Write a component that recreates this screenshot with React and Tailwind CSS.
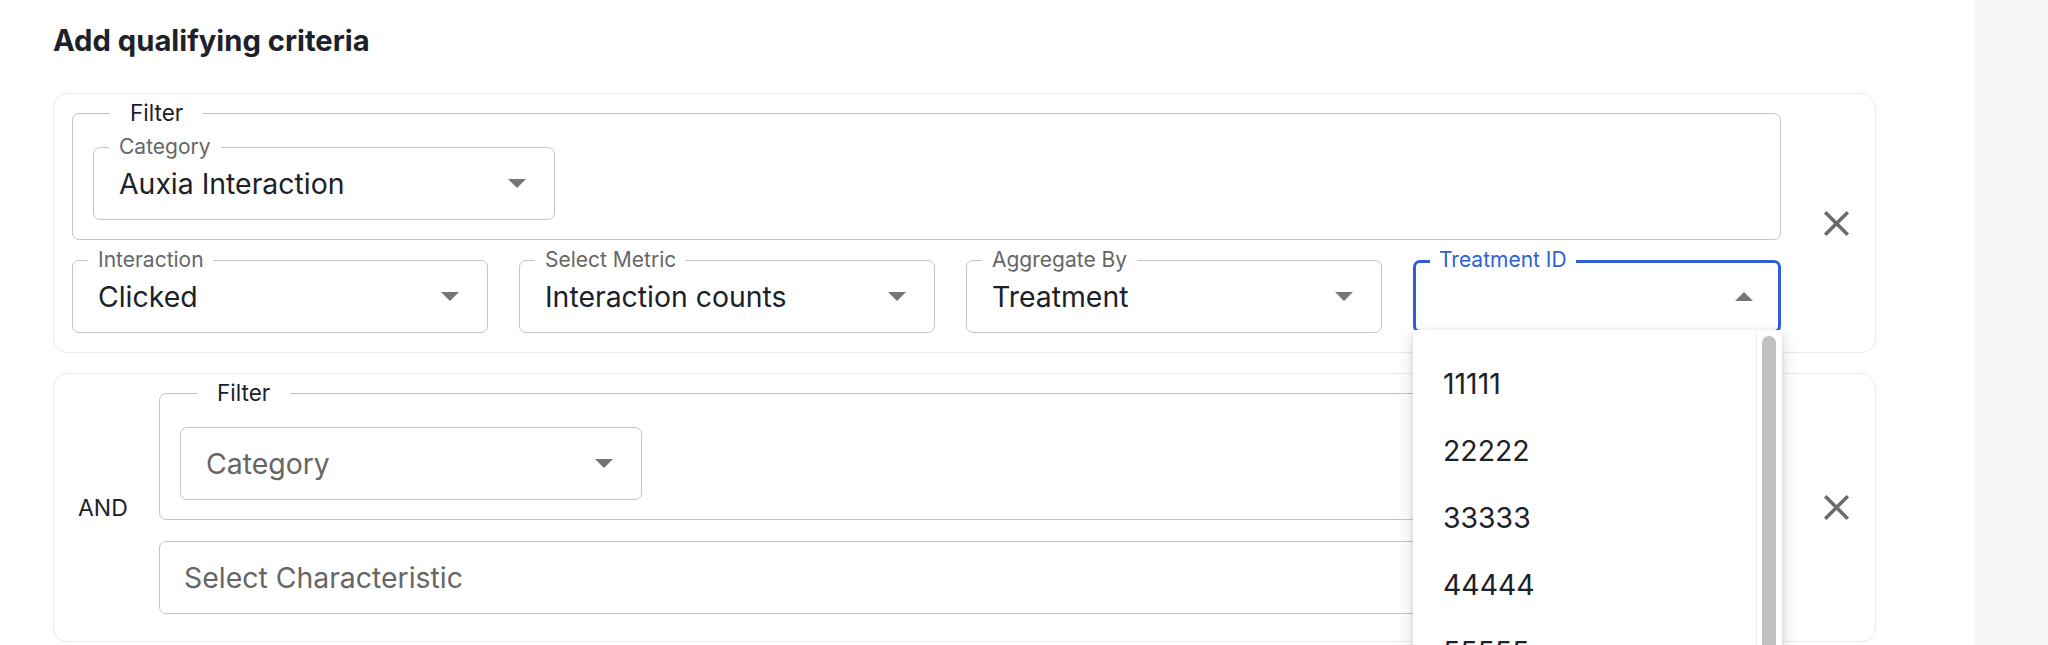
import React from "react";

const font = { fontFamily: 'Inter, "Noto Sans", "Liberation Sans", sans-serif' };

function Arrow({ up }) {
  return (
    <svg width="18" height="9" viewBox="0 0 18 9" className="shrink-0">
      {up ? <path d="M0 9 L9 0 L18 9 Z" fill="#757575" /> : <path d="M0 0 L18 0 L9 9 Z" fill="#757575" />}
    </svg>
  );
}

function CloseIcon() {
  return (
    <svg width="43" height="43" viewBox="0 0 24 24" className="shrink-0">
      <path
        d="M19 6.41 17.59 5 12 10.59 6.41 5 5 6.41 10.59 12 5 17.59 6.41 19 12 13.41 17.59 19 19 17.59 13.41 12z"
        fill="#6b6b6b"
      />
    </svg>
  );
}

function SelectBox({ label, value, placeholder, className }) {
  return (
    <div className={`relative flex h-[73px] items-center rounded-[7px] border border-[#c4c4c4] bg-white pl-[25px] pr-[28px] ${className}`}>
      {label && (
        <span className="absolute -top-[13px] left-[15px] bg-white px-[10px] text-[21px] leading-[24px] text-[#666666]">
          {label}
        </span>
      )}
      {value ? (
        <span className="flex-1 text-[28.4px] leading-[34px] text-[#1d2129]">{value}</span>
      ) : (
        <span className="flex-1 text-[28.4px] leading-[34px] text-[#666666]">{placeholder}</span>
      )}
      <Arrow />
    </div>
  );
}

function Dropdown() {
  const items = ["11111", "22222", "33333", "44444", "55555"];
  return (
    <div className="absolute left-[-3px] top-full z-20 h-[330px] w-[369px] overflow-hidden bg-white pt-[20px] shadow-[0_6px_16px_rgba(0,0,0,0.16),0_2px_6px_rgba(0,0,0,0.08)]">
      {items.map((it) => (
        <div key={it} className="flex h-[67px] items-center pl-[30px] text-[28.4px] leading-[34px] text-[#1d2129]">
          {it}
        </div>
      ))}
      <div className="absolute bottom-0 right-0 top-0 w-[26px] border-l border-[#ececec] bg-white">
        <div className="absolute left-[5px] top-[6px] h-[400px] w-[14px] rounded-full bg-[#c1c1c1]" />
      </div>
    </div>
  );
}

function TreatmentField() {
  return (
    <div className="relative flex h-[73px] w-[368px] items-center rounded-[7px] border-[3px] border-[#2f5fd7] bg-white pl-[23px] pr-[25px]">
      <span className="absolute -top-[15px] left-[14px] bg-white px-[9px] text-[21px] leading-[24px] text-[#2f5fd7]">
        Treatment ID
      </span>
      <span className="flex-1" />
      <Arrow up />
      <Dropdown />
    </div>
  );
}

function FilterGroup({ children, className }) {
  return (
    <fieldset className={`m-0 rounded-[7px] border border-[#c4c4c4] px-[20px] pb-[19px] pt-[22px] ${className}`}>
      <legend className="ml-[17px] px-[20px] text-[22.5px] leading-[24px] text-[#1d2129]">Filter</legend>
      {children}
    </fieldset>
  );
}

export default function App() {
  return (
    <div className="flex h-[645px] w-[2048px] overflow-hidden bg-white" style={font}>
      <main className="w-[1975px] shrink-0 pl-[53px] pt-[23px]">
        <h2 className="text-[29.2px] font-bold leading-[36px] text-[#1d2129]">Add qualifying criteria</h2>

        {/* Card 1 */}
        <div className="relative z-10 mt-[34px] flex w-[1823px] rounded-[14px] border border-[#ebebeb] bg-white pl-[18px]">
          <div className="flex w-[1709px] flex-col pb-[19px] pt-[7px]">
            <FilterGroup>
              <SelectBox label="Category" value="Auxia Interaction" className="w-[462px]" />
            </FilterGroup>
            <div className="mt-[20px] flex gap-[31px]">
              <SelectBox label="Interaction" value="Clicked" className="w-[416px]" />
              <SelectBox label="Select Metric" value="Interaction counts" className="w-[416px]" />
              <SelectBox label="Aggregate By" value="Treatment" className="w-[416px]" />
              <TreatmentField />
            </div>
          </div>
          <div className="ml-[34px] self-center">
            <CloseIcon />
          </div>
        </div>

        {/* Card 2 */}
        <div className="mt-[20px] flex w-[1823px] rounded-[14px] border border-[#ebebeb] bg-white pl-[24px]">
          <div className="w-[81px] shrink-0 self-center text-[23px] leading-[26px] text-[#1d2129]">AND</div>
          <div className="flex w-[1622px] flex-col pb-[27px] pt-[7px]">
            <FilterGroup>
              <SelectBox placeholder="Category" className="w-[462px]" />
            </FilterGroup>
            <div className="mt-[21px] flex h-[73px] items-center rounded-[7px] border border-[#c4c4c4] pl-[24px] text-[28.4px] leading-[34px] text-[#666666]">
              Select Characteristic
            </div>
          </div>
          <div className="ml-[34px] self-center">
            <CloseIcon />
          </div>
        </div>
      </main>
      <aside className="flex-1 bg-[#f5f5f5]" />
    </div>
  );
}
